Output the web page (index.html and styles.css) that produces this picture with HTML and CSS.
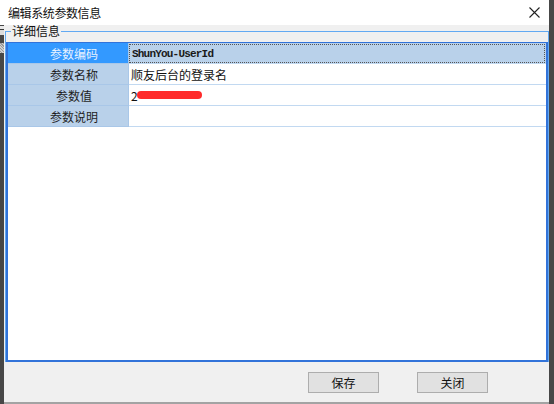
FILE: index.html
```html
<!DOCTYPE html>
<html lang="zh-CN">
<head>
    <meta charset="UTF-8">
    <title>编辑系统参数信息</title>
    <link rel="stylesheet" href="styles.css">
</head>
<body>
    <div class="titlebar">
        <span class="title">编辑系统参数信息</span>
        <svg class="close" width="11" height="11" viewBox="0 0 11 11">
            <path d="M0.5 0.5 L10.5 10.5 M10.5 0.5 L0.5 10.5" stroke="#222" stroke-width="1.1" fill="none"/>
        </svg>
    </div>
    <div class="frame">
        <div class="edge">
            <div class="edge-bit one"></div>
            <div class="edge-bit two"></div>
        </div>
        <div class="client">
            <fieldset class="group">
                <legend>详细信息</legend>
                <div class="grid">
                    <div class="row selected">
                        <div class="head">参数编码</div>
                        <div class="cell code"><span class="focus">ShunYou-UserId</span></div>
                    </div>
                    <div class="row">
                        <div class="head">参数名称</div>
                        <div class="cell">顺友后台的登录名</div>
                    </div>
                    <div class="row">
                        <div class="head">参数值</div>
                        <div class="cell">2<span class="redact"></span></div>
                    </div>
                    <div class="row">
                        <div class="head">参数说明</div>
                        <div class="cell"></div>
                    </div>
                </div>
            </fieldset>
            <div class="buttons">
                <button>保存</button>
                <button>关闭</button>
            </div>
        </div>
    </div>
</body>
</html>
```

FILE: styles.css
```css
body {
    margin: 0;
    width: 554px;
    height: 404px;
    overflow: hidden;
    background-color: #474747;
    font-family: "Noto Sans CJK SC", "Microsoft YaHei", sans-serif;
    font-size: 12px;
    color: #111;
}

.titlebar {
    width: 549px;
    height: 25px;
    background-color: #fff;
    display: flex;
    align-items: center;
    justify-content: space-between;
    box-sizing: border-box;
    padding: 0 9px 0 8px;
}

.title {
    font-size: 12px;
    letter-spacing: -0.4px;
    line-height: 14px;
}

.close {
    display: block;
}

.frame {
    display: flex;
    height: 379px;
}

.edge {
    width: 4px;
    display: flex;
    flex-direction: column;
}

.edge-bit.one {
    height: 9px;
    margin-top: 1px;
    background: linear-gradient(#e9e9e9 0 30%, #3a3a3a 30% 45%, #dcdcdc 45%);
}

.edge-bit.two {
    height: 10px;
    margin-top: 8px;
    background: repeating-linear-gradient(45deg, #cfcfcf 0 1px, #9a9a9a 1px 2px);
}

.client {
    width: 545px;
    background-color: #f0f0f0;
    border-bottom: 2px solid #a3a3a3;
    display: flex;
    flex-direction: column;
}

.group {
    margin: 0 0 0 1px;
    padding: 5px 0 0 0;
    border: 1px solid #62a9f2;
    border-bottom: none;
    min-width: 0;
}

.group legend {
    margin-left: 5px;
    padding: 0 1px;
    font-size: 12px;
    line-height: 12px;
    height: 12px;
    color: #111;
}

.grid {
    height: 317px;
    background-color: #fff;
    border: 2px solid #3273d9;
    border-top-width: 1px;
}

.row {
    display: flex;
    height: 20px;
    border-bottom: 1px solid #c2d9f1;
}

.head {
    width: 108px;
    padding-left: 12px;
    background-color: #b9d1ea;
    border-right: 1px solid #a9c7e8;
    color: #1e1e1e;
    display: flex;
    align-items: center;
    justify-content: center;
    flex-shrink: 0;
}

.row .head {
    box-shadow: 0 1px 0 #a9c7e8;
}

.cell {
    flex: 1;
    display: flex;
    align-items: center;
    padding-left: 2px;
}

.selected .head {
    background-color: #3399ff;
    color: #e8f2ff;
}

.selected .cell {
    background-color: #b9d1ea;
    padding: 0;
}

.focus {
    flex: 1;
    align-self: stretch;
    display: flex;
    align-items: center;
    padding-left: 2px;
    margin: 1px 1px 0 0;
    border: 1px dotted #555;
    font-family: "Liberation Mono", monospace;
    font-size: 11px;
    font-weight: bold;
    letter-spacing: -0.8px;
    color: #1a1a1a;
}

.redact {
    display: inline-block;
    width: 65px;
    height: 8px;
    margin-left: -1px;
    border-radius: 4px;
    background-color: #ff2b2b;
}

.buttons {
    display: flex;
    justify-content: flex-end;
    gap: 38px;
    padding: 10px 61px 0 0;
}

.buttons button {
    width: 71px;
    height: 21px;
    padding: 0;
    background-color: #e1e1e1;
    border: 1px solid #adadad;
    font-family: "Noto Sans CJK SC", sans-serif;
    font-size: 12px;
    color: #111;
}
```
